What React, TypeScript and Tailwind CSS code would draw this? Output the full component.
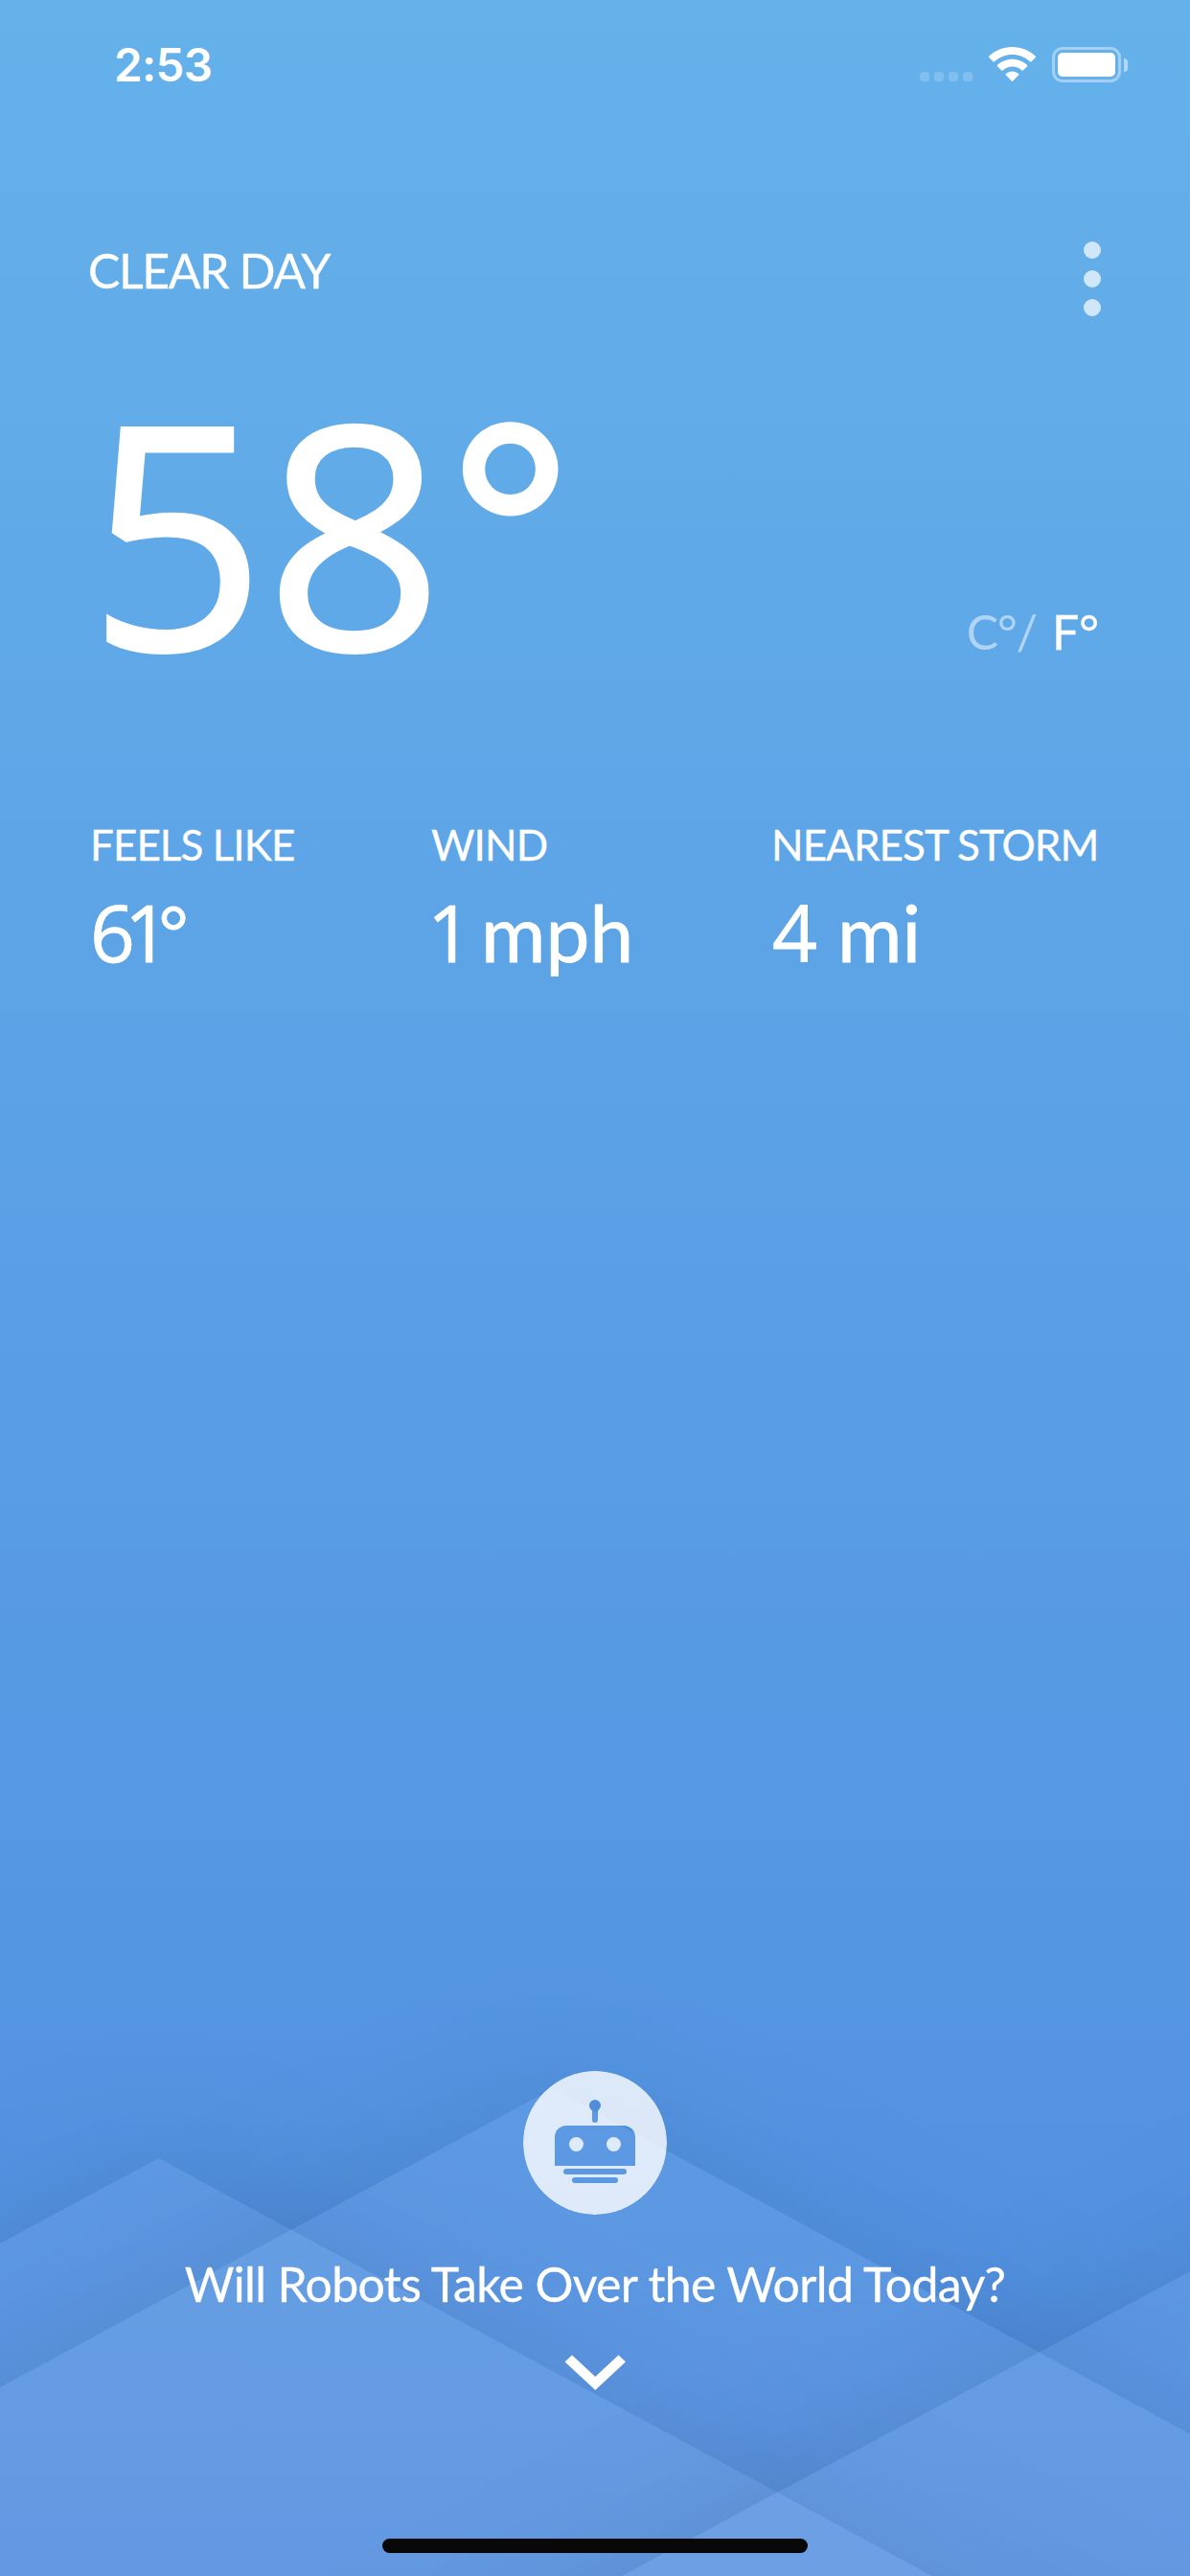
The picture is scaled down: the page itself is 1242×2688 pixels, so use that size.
import React from "react";

function StatusBar() {
  return (
    <header className="flex h-[132px] items-start justify-between pl-[119px] pr-[65px] pt-[44px] font-[Inter,sans-serif]">
      <div className="text-[47.500px] font-semibold leading-[48px] tracking-[-0.6px]">2:53</div>
      <div className="flex items-start pt-[5px]">
        <div className="mr-[17px] flex gap-[5px] pt-[26px]">
          {[0, 1, 2, 3].map((dot) => (
            <i key={dot} className="block size-[10px] rounded-[3.5px] bg-white/20" />
          ))}
        </div>
        <svg className="mr-[17px] h-[36px] w-[49px]" viewBox="0 0 49 36" fill="white">
          <path d="M24.5 0C33.9 0 42.4 3.6 48.7 9.6c.4.4.4 1 0 1.400l-4.200 4.300c-.4.4-1 .4-1.400 0C38.200 10.700 31.700 8 24.500 8S10.800 10.700 5.900 15.300c-.4.4-1 .4-1.400 0L.3 11c-.4-.4-.4-1 0-1.400C6.600 3.600 15.100 0 24.500 0Z" />
          <path d="M24.500 12.700c6 0 11.400 2.300 15.500 6.100.4.4.4 1 0 1.400l-4.200 4.300c-.4.4-1 .4-1.400 0-2.600-2.400-6.100-3.900-9.900-3.900s-7.300 1.500-9.900 3.900c-.4.4-1 .4-1.400 0L9 20.200c-.4-.4-.4-1 0-1.400 4.100-3.800 9.500-6.100 15.500-6.100Z" />
          <path d="M24.500 25.500c2.500 0 4.800.9 6.600 2.400.4.4.5 1 .1 1.400l-6 6.200c-.4.400-1 .4-1.400 0l-6-6.200c-.4-.4-.3-1 .1-1.400 1.800-1.500 4.100-2.400 6.600-2.400Z" />
        </svg>
        <div className="flex items-center gap-[3px]">
          <div className="h-[37px] w-[72px] rounded-[11px] border-[3px] border-white/40 p-[3px]">
            <div className="h-[25px] w-[60px] rounded-[5px] bg-white" />
          </div>
          <div className="h-[14px] w-[4px] rounded-r-full bg-white/50" />
        </div>
      </div>
    </header>
  );
}

function Mountains() {
  const peaks = [
    "M165.500 2252L1500 2972.600V3300H-1200V2986Z",
    "M576.600 2179.400L2040 2972V3300H-900V2978Z",
    "M1500 2232L2900 2980V3300H100V2982Z",
  ];
  return (
    <svg className="absolute inset-0 -z-10 h-[2688px] w-[1242px]" viewBox="0 0 1242 2688">
      <defs>
        <filter id="soft" filterUnits="userSpaceOnUse" x="-1500" y="1800" width="4700" height="1700">
          <feGaussianBlur stdDeviation="72" />
          <feOffset dy="-22" />
        </filter>
        {peaks.map((d, i) => (
          <clipPath id={"sky" + i} key={d}>
            <path d={"M-2000 0H4000V4000H-2000Z " + d} clipRule="evenodd" />
          </clipPath>
        ))}
      </defs>
      {peaks.map((d, i) => (
        <g key={d}>
          <g clipPath={"url(#sky" + i + ")"}>
            <path d={d} fill="black" fillOpacity=".078" filter="url(#soft)" />
          </g>
          <path d={d} fill="white" fillOpacity=".06" />
        </g>
      ))}
    </svg>
  );
}

function Robot() {
  return (
    <svg className="size-[150px]" viewBox="546 2161 150 150">
      <mask id="face">
        <circle cx="621" cy="2236" r="75" fill="white" />
        <g fill="black">
          <circle cx="621" cy="2197" r="6" />
          <rect x="618" y="2197" width="6" height="18" rx="3" />
          <path d="M579 2260v-30a12 12 0 0 1 12-12h60a12 12 0 0 1 12 12v30Z" />
          <rect x="588" y="2263" width="66" height="6" rx="3" />
          <rect x="597" y="2272" width="48" height="6" rx="3" />
        </g>
        <circle cx="601.500" cy="2237.500" r="7.500" fill="white" />
        <circle cx="640.500" cy="2237.500" r="7.500" fill="white" />
      </mask>
      <circle cx="621" cy="2236" r="75" fill="white" fillOpacity=".8" mask="url(#face)" />
    </svg>
  );
}

function Stat({ label, children }: { label: string; children: React.ReactNode }) {
  return (
    <div>
      <dt className="text-[44px] leading-[44px] tracking-[-0.95px] [-webkit-text-stroke:0.3px_white]">{label}</dt>
      <dd className="mt-[28px] flex text-[82px] leading-[82px] [-webkit-text-stroke:0.8px_white]">{children}</dd>
    </div>
  );
}

export default function App() {
  return (
    <div className="relative isolate flex h-[2688px] w-[1242px] flex-col overflow-hidden bg-linear-to-b from-[#65b1ea] to-[#508de0] font-[Lato,sans-serif] text-white">
      <Mountains />
      <StatusBar />

      <main className="flex flex-1 flex-col">
        <div className="flex h-[285px] items-start justify-between pl-[92px] pr-[93px] pt-[120px]">
          <h1 className="whitespace-nowrap pt-[5px] text-[50px] leading-[50px] tracking-[-1.4px] [-webkit-text-stroke:0.3px_white]">CLEAR DAY</h1>
          <button className="flex flex-col gap-[12px]">
            {[0, 1, 2].map((dot) => (
              <i key={dot} className="block size-[18px] rounded-full bg-white/70" />
            ))}
          </button>
        </div>

        <div className="flex h-[442px] items-start justify-between pl-[92px] pr-[95px]">
          <div className="-mt-[26px] flex">
            <span className="font-['Open_Sans',sans-serif] text-[324px] leading-[324px] [-webkit-text-stroke:3.5px_white]">58</span>
            <span className="-mt-[12px] ml-[10px] text-[290px] leading-[324px] [-webkit-text-stroke:5px_white]">°</span>
          </div>
          <div className="flex whitespace-nowrap pt-[217px] text-[50px] leading-[50px]">
            <span className="mr-[16px] tracking-[-1.2px] text-white/50">C°/</span>
            <span className="[-webkit-text-stroke:0.3px_white]">F°</span>
          </div>
        </div>

        <dl className="grid grid-cols-[356px_355px_auto] whitespace-nowrap pl-[94px]">
          <Stat label="FEELS LIKE">
            <span className="font-['Open_Sans',sans-serif] tracking-[-11px]">61</span>
            <span className="text-[74px]">°</span>
          </Stat>
          <Stat label="WIND">
            <span className="-ml-[4px] w-[56px] font-['Open_Sans',sans-serif]">1</span>
            <span>mph</span>
          </Stat>
          <Stat label="NEAREST STORM">
            <span className="ml-px w-[68px] font-['Open_Sans',sans-serif]">4</span>
            <span>mi</span>
          </Stat>
        </dl>
      </main>

      <footer className="flex h-[527px] flex-col items-center">
        <Robot />
        <p className="mt-[47px] whitespace-nowrap text-[50px] leading-[50px] tracking-[-0.65px] [-webkit-text-stroke:0.3px_white]">Will Robots Take Over the World Today?</p>
        <svg className="mt-[49px] h-[37px] w-[64px]" viewBox="589 2456 64 37" fill="white">
          <path d="M589.500 2463.500L597 2456.500L621.300 2479L645.500 2456.500L653 2463.500L621.300 2493Z" />
        </svg>
        <div className="mt-auto mb-[24px] h-[15px] w-[444px] rounded-full bg-[#080808]" />
      </footer>
    </div>
  );
}
